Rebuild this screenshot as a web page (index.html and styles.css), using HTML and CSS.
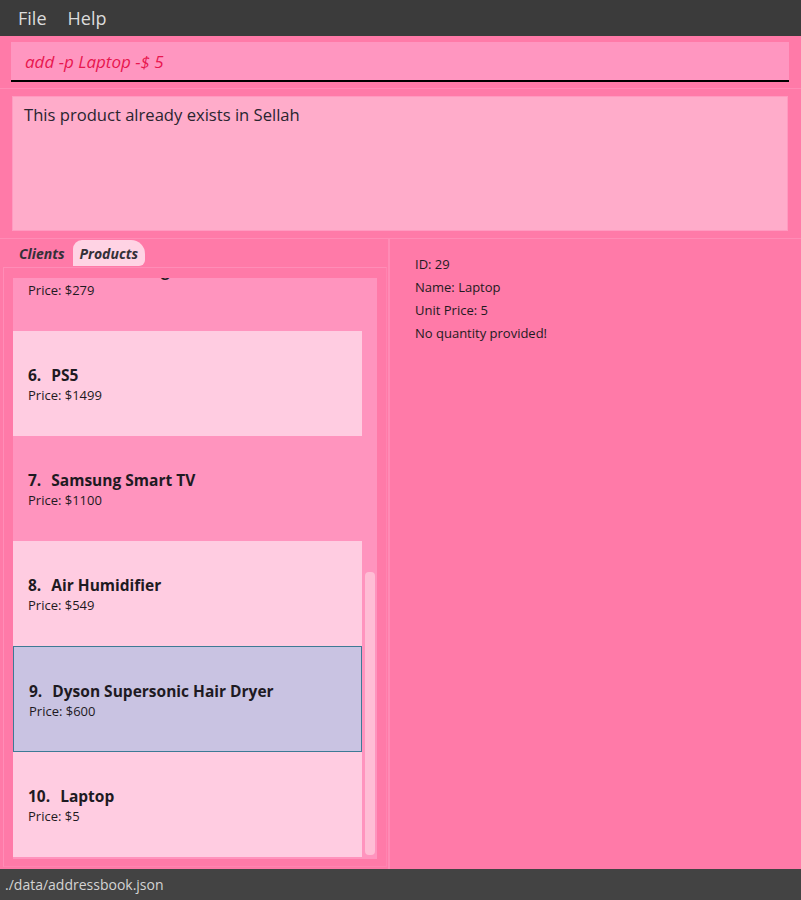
FILE: index.html
```html
<!DOCTYPE html>
<html>
<head>
<meta charset="utf-8">
<title>Sellah</title>
<link rel="stylesheet" href="styles.css">
</head>
<body>
<div class="app">
  <div class="menubar">
    <span class="menu-item">File</span>
    <span class="menu-item">Help</span>
  </div>
  <div class="main">
    <div class="cmd-section">
      <div class="cmd-box"><span class="cmd-text">add -p Laptop -$ 5</span></div>
    </div>
    <div class="result-section">
      <div class="result-box">This product already exists in Sellah</div>
    </div>
    <div class="bottom">
      <div class="left-pane">
        <div class="tabs">
          <span class="tab">Clients</span>
          <span class="tab active">Products</span>
        </div>
        <div class="list-frame">
          <div class="list">
            <div class="cells">
              <div class="cells-inner">
                <div class="cell odd">
                  <div class="cell-title"><span class="idx">5.</span>Electric Cooling Fan</div>
                  <div class="cell-price">Price: $279</div>
                </div>
                <div class="cell even">
                  <div class="cell-title"><span class="idx">6.</span>PS5</div>
                  <div class="cell-price">Price: $1499</div>
                </div>
                <div class="cell odd">
                  <div class="cell-title"><span class="idx">7.</span>Samsung Smart TV</div>
                  <div class="cell-price">Price: $1100</div>
                </div>
                <div class="cell even">
                  <div class="cell-title"><span class="idx">8.</span>Air Humidifier</div>
                  <div class="cell-price">Price: $549</div>
                </div>
                <div class="cell selected">
                  <div class="cell-title"><span class="idx">9.</span>Dyson Supersonic Hair Dryer</div>
                  <div class="cell-price">Price: $600</div>
                </div>
                <div class="cell even">
                  <div class="cell-title"><span class="idx">10.</span>Laptop</div>
                  <div class="cell-price">Price: $5</div>
                </div>
              </div>
            </div>
            <div class="scrollbar"><div class="thumb"></div></div>
          </div>
        </div>
      </div>
      <div class="right-pane">
        <div class="detail-line">ID: 29</div>
        <div class="detail-line">Name: Laptop</div>
        <div class="detail-line">Unit Price: 5</div>
        <div class="detail-line">No quantity provided!</div>
      </div>
    </div>
  </div>
  <div class="statusbar">./data/addressbook.json</div>
</div>
</body>
</html>
```

FILE: styles.css
```css
* { box-sizing: border-box; }
html, body { margin: 0; padding: 0; }
body {
  font-family: "Open Sans", "Noto Sans", "DejaVu Sans", sans-serif;
  background: #ff7aa8;
}
.app {
  width: 801px;
  height: 900px;
  display: flex;
  flex-direction: column;
}
.menubar {
  height: 36px;
  background: #3b3b3b;
  display: flex;
  align-items: center;
  padding-left: 18px;
  gap: 21px;
}
.menu-item {
  color: #dcdcdc;
  font-size: 18px;
  line-height: 24px;
}
.main {
  height: 833px;
  background: #ff7aa8;
  display: flex;
  flex-direction: column;
}
.cmd-section {
  padding: 6px 12px 6px 11px;
  border-bottom: 1px solid #ff8cb6;
}
.cmd-box {
  height: 40px;
  background: #ff96c0;
  border-bottom: 2px solid #000;
  display: flex;
  align-items: center;
  padding-left: 14px;
}
.cmd-text {
  font-style: italic;
  font-size: 17px;
  color: #e8174f;
}
.result-section {
  padding: 7px 13px 7px 12px;
  border-bottom: 1px solid #ff8cb6;
}
.result-box {
  height: 135px;
  background: #ffacca;
  border: 1px solid #ff9ac0;
  padding: 6px 11px;
  font-size: 16.6px;
  line-height: 24px;
  color: #2a2530;
}
.bottom {
  flex: 1;
  display: flex;
  min-height: 0;
}
.left-pane {
  width: 390px;
  border-right: 2px solid #ff8bb5;
  display: flex;
  flex-direction: column;
}
.tabs {
  height: 28px;
  display: flex;
  align-items: flex-start;
  padding-left: 12px;
  padding-top: 1px;
  gap: 1px;
}
.tab {
  height: 26px;
  padding: 2px 7px 0;
  display: flex;
  align-items: center;
  font-size: 14px;
  line-height: 18px;
  font-weight: 700;
  font-style: italic;
  color: #343038;
}
.tab.active {
  background: #ffd3e4;
  border-radius: 9px 14px 6px 0;
}
.list-frame {
  flex: 1;
  margin: 0 1px 2px 3px;
  border: 1px solid #ff8db7;
  border-right-color: #ff84b0;
  border-bottom-color: #ff84b0;
  padding: 10px 9px 6px 9px;
  display: flex;
}
.list {
  flex: 1;
  height: 581px;
  display: flex;
  background: #ff93bd;
}
.cells {
  width: 349px;
  overflow: hidden;
}
.cells-inner {
  margin-top: -52px;
}
.cell {
  height: 105px;
  padding: 34px 0 0 15px;
  color: #1e1a22;
}
.cell.odd { background: #ff94be; }
.cell.even { background: #ffcce1; }
.cell.selected {
  height: 106px;
  background: #c9c3e2;
  border: 1px solid #3d7a95;
  padding-left: 15px;
  padding-top: 34px;
}
.cell-title {
  font-size: 15.5px;
  font-weight: 700;
  line-height: 20px;
  white-space: nowrap;
}
.idx {
  margin-right: 10px;
}
.cell-price {
  font-size: 13px;
  line-height: 17px;
  margin-top: 2px;
}
.scrollbar {
  width: 15px;
  position: relative;
  background: #ff94be;
}
.thumb {
  position: absolute;
  left: 3px;
  width: 10px;
  top: 294px;
  height: 283px;
  border-radius: 4px;
  background: #ffbdd5;
}
.right-pane {
  flex: 1;
  padding: 14px 0 0 25px;
  background: #ff7aa8;
}
.detail-line {
  font-size: 13px;
  line-height: 23px;
  color: #1e1a22;
}
.statusbar {
  height: 31px;
  background: #434343;
  color: #d4d4d4;
  font-size: 14px;
  padding-left: 5px;
  display: flex;
  align-items: center;
}
```
